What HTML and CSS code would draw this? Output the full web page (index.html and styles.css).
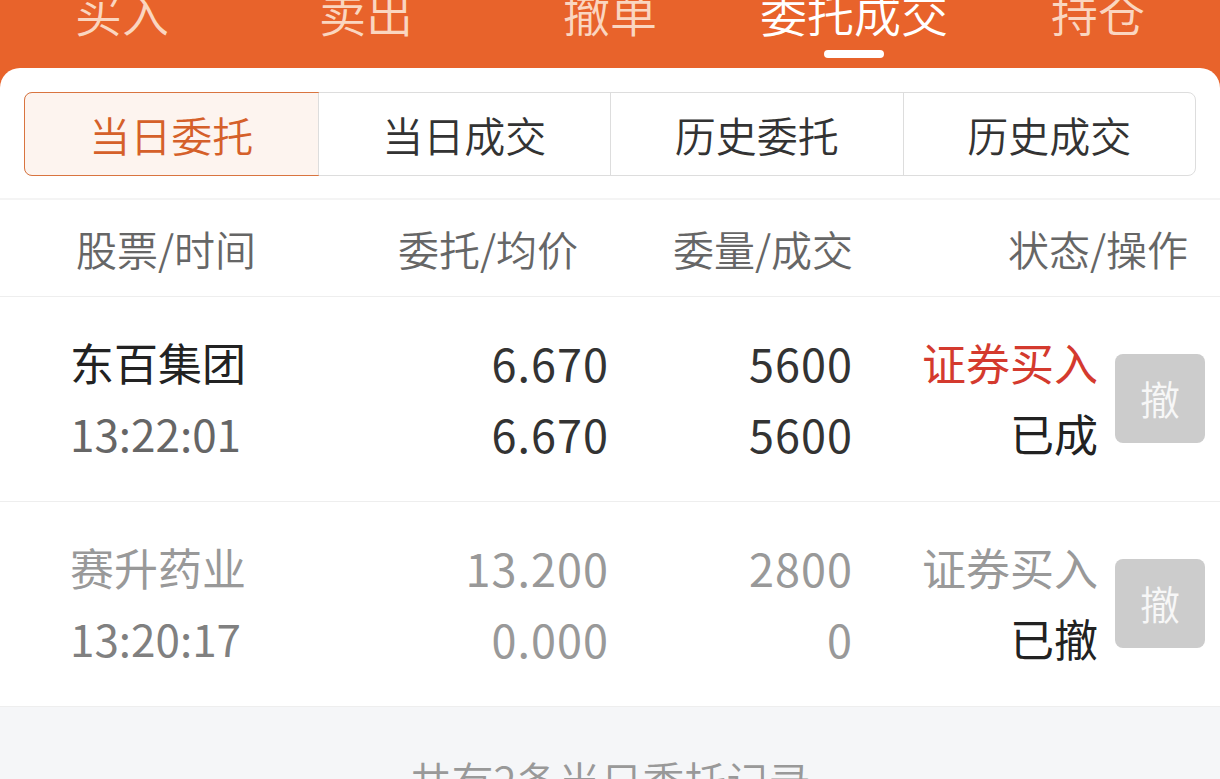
FILE: index.html
```html
<!DOCTYPE html>
<html lang="zh-CN">
<head>
<meta charset="utf-8">
<title>委托成交</title>
<link rel="stylesheet" href="styles.css">
</head>
<body>
<div class="app">
  <nav class="topnav">
    <div class="nav-item">买入</div>
    <div class="nav-item">卖出</div>
    <div class="nav-item">撤单</div>
    <div class="nav-item active">委托成交<span class="nav-bar"></span></div>
    <div class="nav-item">持仓</div>
  </nav>
  <main class="card">
    <div class="seg-wrap">
      <div class="seg">
        <div class="seg-item active">当日委托</div>
        <div class="seg-item">当日成交</div>
        <div class="seg-item">历史委托</div>
        <div class="seg-item">历史成交</div>
      </div>
    </div>
    <div class="thead">
      <div class="th">股票/时间</div>
      <div class="th r">委托/均价</div>
      <div class="th r">委量/成交</div>
      <div class="th r">状态/操作</div>
    </div>
    <div class="row">
      <div class="cell"><div class="name">东百集团</div><div class="time">13:22:01</div></div>
      <div class="cell r num"><div>6.670</div><div>6.670</div></div>
      <div class="cell r num"><div>5600</div><div>5600</div></div>
      <div class="cell r"><div class="buy">证券买入</div><div class="status">已成</div></div>
      <div class="btn">撤</div>
    </div>
    <div class="row dim">
      <div class="cell"><div class="name">赛升药业</div><div class="time">13:20:17</div></div>
      <div class="cell r num"><div>13.200</div><div>0.000</div></div>
      <div class="cell r num"><div>2800</div><div>0</div></div>
      <div class="cell r"><div class="buy">证券买入</div><div class="status">已撤</div></div>
      <div class="btn">撤</div>
    </div>
  </main>
  <footer class="foot">共有2条当日委托记录</footer>
</div>
</body>
</html>
```
FILE: styles.css
```css
* { box-sizing: border-box; }
html, body { margin: 0; padding: 0; }
body {
  width: 1220px;
  height: 779px;
  overflow: hidden;
  font-family: "Noto Sans CJK SC", "Noto Sans", sans-serif;
  font-weight: 350;
  background: #F5F6F8;
}
.app {
  background: linear-gradient(#E8632B 0 120px, #F5F6F8 120px);
  min-height: 779px;
}
.topnav {
  height: 68px;
  display: grid;
  grid-template-columns: repeat(5, 1fr);
  background: #E8632B;
}
.nav-item {
  display: flex;
  flex-direction: column;
  align-items: center;
  margin-top: -12px;
  font-size: 47px;
  line-height: 48px;
  color: #FAD6C0;
}
.nav-item.active { color: #fff; }
.nav-bar {
  display: block;
  width: 60px;
  height: 8px;
  margin-top: 14px;
  border-radius: 4px;
  background: #fff;
}
.card {
  background: #fff;
  border-radius: 20px 20px 0 0;
}
.seg-wrap {
  padding: 24px 24px 22px;
  border-bottom: 2px solid #F4F4F4;
}
.seg {
  display: grid;
  grid-template-columns: repeat(4, 1fr);
  height: 84px;
  border: 1px solid #DDDDDD;
  border-radius: 8px;
}
.seg-item {
  display: flex;
  align-items: center;
  justify-content: center;
  font-size: 41px;
  color: #333;
  border-left: 1px solid #DDDDDD;
}
.seg-item:first-child { border-left: none; }
.seg-item.active {
  margin: -1px;
  border: 1px solid #D9743F;
  border-radius: 8px 0 0 8px;
  background: #FDF4EF;
  color: #D5602A;
}
.thead {
  display: grid;
  grid-template-columns: 302px 200px 275px 335px;
  padding-left: 76px;
  height: 97px;
  align-items: center;
  border-bottom: 1px solid #EEEEEE;
}
.th {
  font-size: 41px;
  color: #666;
}
.r { text-align: right; }
.row {
  display: grid;
  grid-template-columns: 300px 238px 244px 246px 90px;
  align-items: center;
  padding: 30px 0 32px 70px;
  border-bottom: 1px solid #EEEEEE;
}
.cell {
  font-size: 44px;
  line-height: 71px;
  font-weight: 400;
  color: #333;
}
.num { font-size: 45px; letter-spacing: 1px; margin-right: -1px; }
.name { color: #222; }
.time { color: #666; }
.buy { color: #D43A2E; }
.status { color: #222; }
.btn {
  margin-left: 17px;
  width: 90px;
  height: 89px;
  display: flex;
  align-items: center;
  justify-content: center;
  border-radius: 8px;
  background: #CCCCCC;
  color: #F7F7F7;
  font-size: 40px;
}
.row.dim .name,
.row.dim .num,
.row.dim .buy { color: #999; }
.row.dim .time { color: #808080; }
.foot {
  padding-top: 52px;
  text-align: center;
  font-size: 42px;
  line-height: 42px;
  color: #999;
}
```
